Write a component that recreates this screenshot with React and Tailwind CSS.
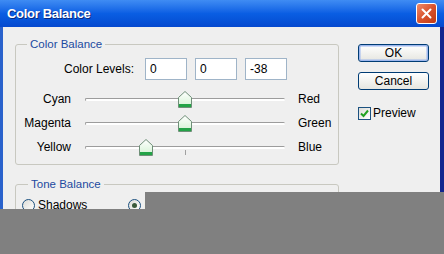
import React from "react";

function Thumb() {
  return (
    <svg width="14" height="17" viewBox="0 0 14 17">
      <defs>
        <linearGradient id="tg" x1="0" y1="0" x2="0" y2="1">
          <stop offset="0" stopColor="#ffffff" />
          <stop offset="1" stopColor="#d2f2d2" />
        </linearGradient>
      </defs>
      <path d="M0.5 6.5 L7 0.5 L13.5 6.5 L13.5 16.5 L0.5 16.5 Z" fill="url(#tg)" stroke="#6f8f78" />
      <rect x="1" y="13" width="12" height="3" fill="#23a347" />
    </svg>
  );
}

function SliderRow({ left, right, pos, tick }) {
  return (
    <div className="flex h-[24px] shrink-0 items-center">
      <div className="w-[55px] text-right">{left}</div>
      <div className="relative ml-[14px] h-[3px] w-[200px] rounded-sm border-t border-l border-t-[#9c9c9c] border-l-[#9c9c9c] bg-white">
        {tick && <div className="absolute left-[99px] top-[3px] h-[5px] w-px bg-[#a0a0a0]" />}
        <div className="absolute top-[-8px]" style={{ left: pos - 85 - 7 }}>
          <Thumb />
        </div>
      </div>
      <div className="ml-[13px]">{right}</div>
    </div>
  );
}

function Radio({ checked }) {
  return (
    <div className="flex h-[13px] w-[13px] shrink-0 items-center justify-center rounded-full border border-[#1c5180] bg-gradient-to-br from-[#dcdcd7] to-white">
      {checked && <div className="h-[5px] w-[5px] rounded-full bg-[#3a5a3a]" />}
    </div>
  );
}

export default function App() {
  return (
    <div className="relative h-[254px] w-[444px] overflow-hidden bg-[#efefef] font-['Liberation_Sans',Arial,sans-serif] text-[12px] leading-[14px] text-black">
      {/* Title bar */}
      <div className="flex h-[27px] items-center justify-between bg-gradient-to-b from-[#3f8cf3] via-[#0a5ee3] to-[#0549cf] pl-[7px] pr-[7px]">
        <span className="text-[13px] font-bold tracking-[-0.3px] text-white [text-shadow:1px_1px_0_#0a2a80]">
          Color Balance
        </span>
        <div className="flex h-[21px] w-[21px] items-center justify-center rounded-[3px] border border-white bg-gradient-to-br from-[#ee8a6a] via-[#d9522c] to-[#c13a12]">
          <svg width="11" height="11" viewBox="0 0 11 11">
            <path d="M1.5 1.5 L9.5 9.5 M9.5 1.5 L1.5 9.5" stroke="white" strokeWidth="2" strokeLinecap="round" />
          </svg>
        </div>
      </div>

      {/* Body */}
      <div className="flex h-[227px] border-l-[3px] border-r-[4px] border-l-[#2a62cc] border-r-[#12258f]">
        <div className="ml-[12px] flex flex-col">
          {/* Color Balance group */}
          <div className="mt-[17px] flex h-[121px] w-[324px] shrink-0 flex-col rounded-[3px] border border-[#c8c8c0]">
            <div className="-mt-[8px] ml-[11px] w-fit bg-[#efefef] px-[3px] text-[11.5px] text-[#1c4aa0]">
              Color Balance
            </div>
            <div className="mt-[7px] flex h-[22px] shrink-0 items-center">
              <div className="w-[118px] text-right">Color Levels:</div>
              <div className="ml-[11px] flex gap-[8px]">
                {["0", "0", "-38"].map((v, i) => (
                  <div key={i} className="flex h-[22px] w-[42px] items-center border border-[#9fb4c8] bg-white pl-[4px]">
                    {v}
                  </div>
                ))}
              </div>
            </div>
            <div className="mt-[7px] flex flex-col">
              <SliderRow left="Cyan" right="Red" pos={184} />
              <SliderRow left="Magenta" right="Green" pos={184} />
              <SliderRow left="Yellow" right="Blue" pos={145} tick />
            </div>
          </div>

          {/* Tone Balance group */}
          <div className="mt-[19px] flex h-[80px] w-[324px] shrink-0 flex-col rounded-[3px] border border-[#c8c8c0]">
            <div className="-mt-[8px] ml-[12px] w-fit bg-[#efefef] px-[3px] text-[11.5px] text-[#1c4aa0]">
              Tone Balance
            </div>
            <div className="ml-[6px] mt-[7px] flex items-center">
              <Radio />
              <span className="ml-[3px]">Shadows</span>
              <div className="ml-[41px]">
                <Radio checked />
              </div>
              <span className="ml-[3px]">Midtones</span>
            </div>
          </div>
        </div>

        {/* Buttons */}
        <div className="ml-[19px] flex flex-col">
          <div className="mt-[17px] flex h-[18px] w-[71px] items-center justify-center rounded-[3px] border border-[#003c74] bg-gradient-to-b from-white to-[#e6e6e0] shadow-[inset_0_0_0_1.5px_#9db7ee]">
            OK
          </div>
          <div className="mt-[10px] flex h-[18px] w-[71px] items-center justify-center rounded-[3px] border border-[#003c74] bg-gradient-to-b from-white to-[#e6e6e0]">
            Cancel
          </div>
          <div className="mt-[16px] flex items-center">
            <div className="flex h-[13px] w-[13px] items-center justify-center border border-[#1c5180] bg-gradient-to-br from-[#dcdcd7] to-white">
              <svg width="9" height="9" viewBox="0 0 9 9">
                <path d="M1 4.5 L3.5 7 L8 1.5" stroke="#21a121" strokeWidth="2" fill="none" />
              </svg>
            </div>
            <span className="ml-[2px]">Preview</span>
          </div>
        </div>
      </div>

      {/* Grey cover regions */}
      <div className="absolute bottom-0 left-[145px] right-0 top-[192px] bg-[#808080]" />
      <div className="absolute bottom-0 left-0 right-0 top-[209px] bg-[#808080]" />
    </div>
  );
}
